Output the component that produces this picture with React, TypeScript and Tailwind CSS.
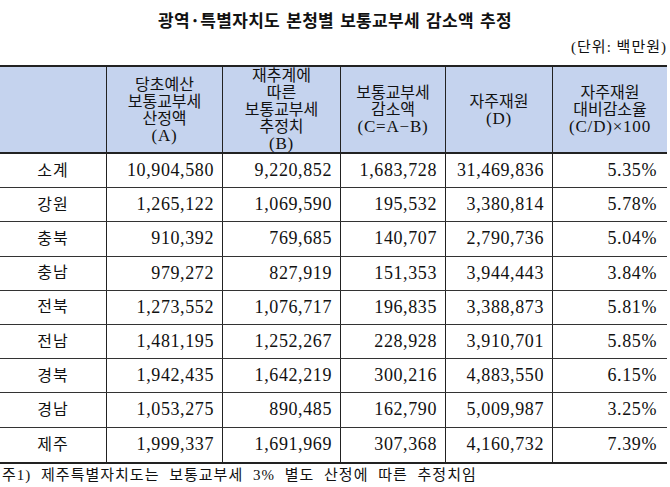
const rows: [string, string, string, string, string, string][] = [
  ["소계", "10,904,580", "9,220,852", "1,683,728", "31,469,836", "5.35%"],
  ["강원", "1,265,122", "1,069,590", "195,532", "3,380,814", "5.78%"],
  ["충북", "910,392", "769,685", "140,707", "2,790,736", "5.04%"],
  ["충남", "979,272", "827,919", "151,353", "3,944,443", "3.84%"],
  ["전북", "1,273,552", "1,076,717", "196,835", "3,388,873", "5.81%"],
  ["전남", "1,481,195", "1,252,267", "228,928", "3,910,701", "5.85%"],
  ["경북", "1,942,435", "1,642,219", "300,216", "4,883,550", "6.15%"],
  ["경남", "1,053,275", "890,485", "162,790", "5,009,987", "3.25%"],
  ["제주", "1,999,337", "1,691,969", "307,368", "4,160,732", "7.39%"],
];

const widths = ["w-[107px]", "w-[116px]", "w-[118px]", "w-[105px]", "w-[107px]", "w-[114px]"];

const headers: string[][] = [
  [],
  ["당초예산", "보통교부세", "산정액", "(A)"],
  ["재추계에", "따른", "보통교부세", "추정치", "(B)"],
  ["보통교부세", "감소액", "(C=A−B)"],
  ["자주재원", "(D)"],
  ["자주재원", "대비감소율", "(C/D)×100"],
];

export default function App(): JSX.Element {
  return (
    <div className="h-[487px] w-[670px] overflow-hidden bg-white font-['Liberation_Serif','Noto_Sans_CJK_KR',serif] text-[#111]">
      <h1 className="pt-[8px] text-center font-['Noto_Sans_CJK_KR',sans-serif] text-[17px] leading-[24px] font-bold tracking-[0.3px] [word-spacing:2px]">
        광역·특별자치도 본청별 보통교부세 감소액 추정
      </h1>
      <p className="mt-[5px] pr-[3px] text-right text-[15px] leading-[20px] tracking-[1px]">(단위: 백만원)</p>

      <div className="mt-[8px] w-[667px] border-t-2 border-b-2 border-[#222]">
        <div className="flex h-[87px] border-b-2 border-[#222] bg-[#c5d3ee]">
          {headers.map((lines, i) => (
            <div
              key={i}
              className={`${widths[i]} flex flex-col items-center justify-center text-center ${
                i < 5 ? "border-r border-[#222]" : ""
              }`}
            >
              {lines.map((l) => (
                <span
                  key={l}
                  className={`h-[17px] leading-[17px] ${
                    l.startsWith("(") ? "text-[17px] tracking-[0.8px]" : "text-[16px]"
                  }`}
                >
                  {l}
                </span>
              ))}
            </div>
          ))}
        </div>

        {rows.map((r, ri) => (
          <div
            key={r[0]}
            className={`flex h-[34.2px] ${ri < rows.length - 1 ? "border-b border-[#333]" : ""}`}
          >
            {r.map((c, ci) => (
              <div
                key={ci}
                className={`${widths[ci]} flex items-center ${
                  ci === 0
                    ? "justify-center text-[16px] tracking-[1px]"
                    : "justify-end text-[18px] tracking-[0.6px]"
                } ${ci === 5 ? "pr-[10px]" : ci > 0 ? "pr-[8px]" : ""} ${ci < 5 ? "border-r border-[#222]" : ""}`}
              >
                {c}
              </div>
            ))}
          </div>
        ))}
      </div>

      <p className="pl-[2px] text-[15px] leading-[22px] tracking-[1px] [word-spacing:5px]">
        주1) 제주특별자치도는 보통교부세 3% 별도 산정에 따른 추정치임
      </p>
    </div>
  );
}
